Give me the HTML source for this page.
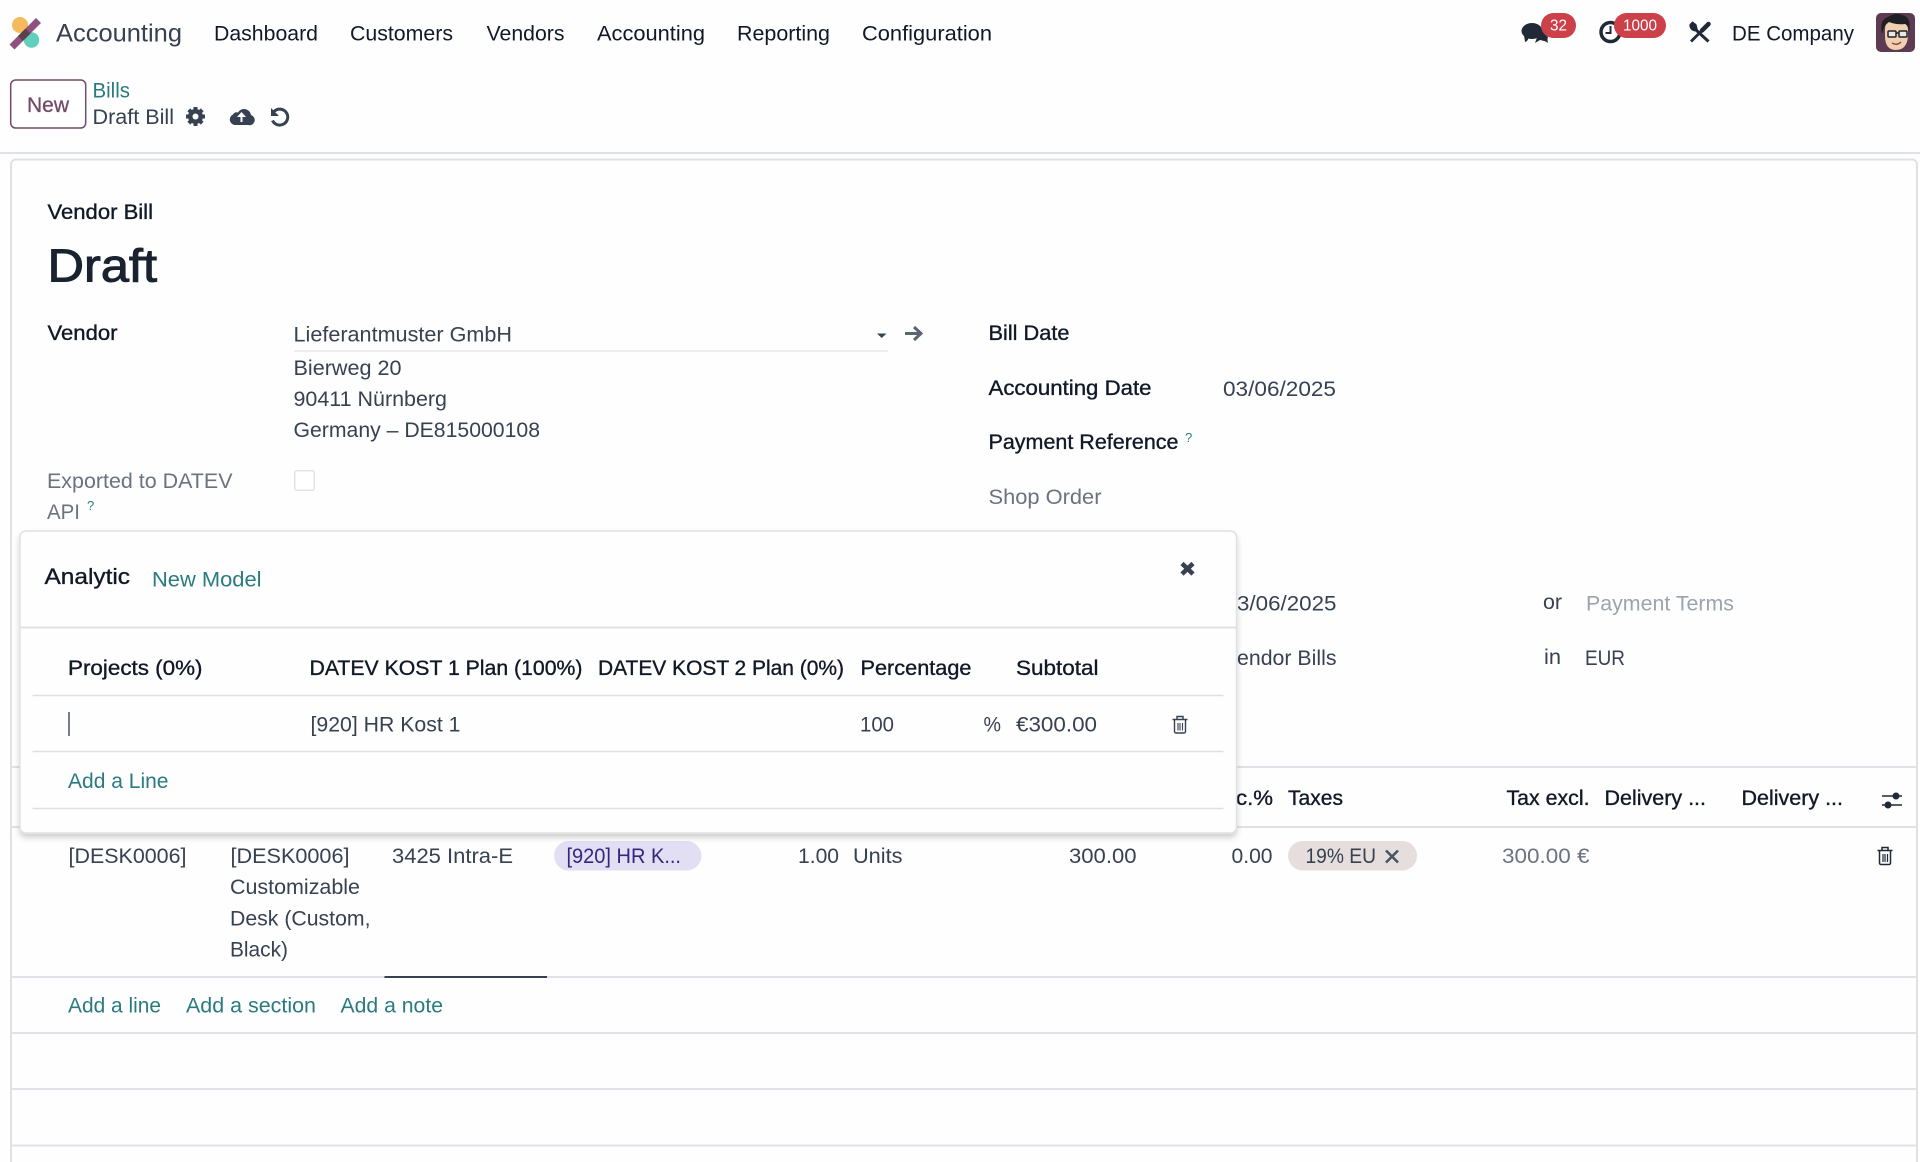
<!DOCTYPE html>
<html lang="en">
<head>
<meta charset="utf-8">
<title>Draft Bill</title>
<style>
html,body{margin:0;padding:0;background:#fefefe;width:1920px;height:1162px;overflow:hidden}
svg{display:block}
text{font-family:"Liberation Sans",sans-serif;font-size:20.8px;fill:#374151}
.h{fill:#111827}
.m{fill:#111827;stroke:#111827;stroke-width:.35px}
.t{fill:#2a7b80}
.g{fill:#6b7280}
.p{fill:#9ca3af}
.l{stroke:#dfe1e4;stroke-width:2;fill:none}
.s{stroke:#dfe1e4;stroke-width:1.5;fill:none}
</style>
</head>
<body>
<svg width="1920" height="1162" viewBox="0 0 1920 1162" xmlns="http://www.w3.org/2000/svg">
<defs>
<filter id="sh" x="-5%" y="-5%" width="110%" height="115%"><feDropShadow dx="0" dy="4" stdDeviation="3" flood-color="#000" flood-opacity=".18"/></filter>
</defs>

<!-- navbar -->
<circle cx="20" cy="25" r="8" fill="#F3BB5C"/>
<circle cx="31.5" cy="40" r="7.7" fill="#5FD0B9"/>
<path d="M12 47 L38.5 20.5" stroke="#8F527F" stroke-width="7"/>
<path d="M20.5 38.5 L28 31" stroke="#5b4150" stroke-width="7"/>
<text x="56" y="41.5" style="font-size:25px" textLength="126" lengthAdjust="spacingAndGlyphs">Accounting</text>
<text class="h" x="214" y="40.5" textLength="104" lengthAdjust="spacingAndGlyphs">Dashboard</text>
<text class="h" x="350" y="40.5" textLength="103" lengthAdjust="spacingAndGlyphs">Customers</text>
<text class="h" x="486.5" y="40.5" textLength="78" lengthAdjust="spacingAndGlyphs">Vendors</text>
<text class="h" x="597" y="40.5" textLength="108" lengthAdjust="spacingAndGlyphs">Accounting</text>
<text class="h" x="737" y="40.5" textLength="93" lengthAdjust="spacingAndGlyphs">Reporting</text>
<text class="h" x="862" y="40.5" textLength="130" lengthAdjust="spacingAndGlyphs">Configuration</text>

<!-- chat icon -->
<g fill="#1f2937">
<path d="M1535 43 l5 -3 q6 1 8 3 q-1 -4 0 -6 l-8 -8 z"/>
<ellipse cx="1532" cy="31" rx="10.5" ry="8"/>
<path d="M1525 42 q3 -1 4 -5 l-5 -2 z"/>
</g>
<!-- clock -->
<circle cx="1610.5" cy="32" r="9.5" fill="none" stroke="#1f2937" stroke-width="3.5"/>
<path d="M1610.5 26v7h-5" fill="none" stroke="#1f2937" stroke-width="2"/>
<!-- badges -->
<rect x="1541" y="13" width="35" height="25" rx="12.5" fill="#cc404a"/>
<text x="1550" y="30.5" style="font-size:16px;fill:#fff" textLength="17" lengthAdjust="spacingAndGlyphs">32</text>
<rect x="1614" y="13" width="52" height="25" rx="12.5" fill="#cc404a"/>
<text x="1623" y="30.5" style="font-size:16px;fill:#fff" textLength="34" lengthAdjust="spacingAndGlyphs">1000</text>
<!-- tools -->
<g fill="none" stroke="#1f2937">
<path d="M1695 29 L1708.5 41.5" stroke-width="3"/>
<path d="M1690 24.5 a5.5 5.5 0 0 0 7.500 6 l-1.500 -6 -3.500 -2.500z" fill="#1f2937" stroke-width="1"/>
<path d="M1691 41.5 L1701 31.5" stroke-width="2.800"/>
<path d="M1702 30.500 L1708.5 24" stroke-width="4.500" stroke-linecap="round"/>
</g>
<text class="h" x="1732" y="40.5" textLength="122" lengthAdjust="spacingAndGlyphs">DE Company</text>
<!-- avatar -->
<rect x="1876" y="13" width="39" height="39" rx="5" fill="#5d3c53"/>
<path d="M1885 30 q0 -13 11 -13 q12 0 12 13 v6 q-1 14 -12 14 q-11 0 -11 -14z" fill="#f1cfb1"/>
<path d="M1882 34 q-3 -14 6 -17 q8 -5 14 -2 q10 2 7 17 q-1 -7 -4 -8 q-8 1 -16 -2 q-5 3 -7 12z" fill="#1f1f24"/>
<rect x="1888" y="31" width="8" height="6" rx="1" fill="#e8e8e8" stroke="#222" stroke-width="1.5"/>
<rect x="1899" y="31" width="8" height="6" rx="1" fill="#e8e8e8" stroke="#222" stroke-width="1.5"/>
<path d="M1896 33h3" stroke="#222" stroke-width="1.5"/>
<path d="M1892 43q5 3 9 -1" stroke="#8a4a3a" stroke-width="1.5" fill="none"/>

<!-- control panel -->
<rect x="10.7" y="80" width="75" height="48" rx="5" fill="#fff" stroke="#714B67" stroke-width="1.5"/>
<text x="27" y="112" style="fill:#714B67;stroke:#714B67;stroke-width:.3px" textLength="42" lengthAdjust="spacingAndGlyphs">New</text>
<text class="t" x="92.5" y="97.5" textLength="37.5" lengthAdjust="spacingAndGlyphs">Bills</text>
<text x="92.5" y="124" textLength="81.5" lengthAdjust="spacingAndGlyphs">Draft Bill</text>
<!-- gear -->
<g fill="#374151" transform="translate(195.5 116.5)">
<circle r="5.5" fill="none" stroke="#374151" stroke-width="4"/>
<rect x="-2" y="-9.500" width="4" height="19"/><rect x="-2" y="-9.500" width="4" height="19" transform="rotate(45)"/><rect x="-2" y="-9.500" width="4" height="19" transform="rotate(90)"/><rect x="-2" y="-9.500" width="4" height="19" transform="rotate(135)"/>
<circle r="3" fill="#fefefe"/>
</g>
<!-- cloud -->
<path d="M235 125 a5.500 5.500 0 0 1 -2 -10.500 a4 4 0 0 1 5 -2 a7 7 0 0 1 13 2.500 a5 5 0 0 1 -3 10z" fill="#374151"/>
<path d="M240.500 122v-5h-3.500l4.500-5 4.500 5h-3.500v5z" fill="#fff"/>
<!-- undo -->
<path d="M274 111.5 a8 8 0 1 1 -1.500 9" fill="none" stroke="#374151" stroke-width="3"/>
<path d="M271 108v8h8z" fill="#374151"/>
<path class="l" d="M0 153H1920"/>

<!-- sheet -->
<path class="l" d="M11 1162V165a5 5 0 0 1 5-5.500H1912a5 5 0 0 1 5 5.500V1162"/>

<text class="m" x="47.5" y="219" textLength="105.5" lengthAdjust="spacingAndGlyphs">Vendor Bill</text>
<text x="47.5" y="281.5" style="font-size:46px;fill:#1a2230;stroke:#1a2230;stroke-width:1px" textLength="109.5" lengthAdjust="spacingAndGlyphs">Draft</text>

<text class="m" x="47.5" y="340" textLength="70" lengthAdjust="spacingAndGlyphs">Vendor</text>
<text x="293.5" y="341.5" textLength="218.5" lengthAdjust="spacingAndGlyphs">Lieferantmuster GmbH</text>
<path d="M294 351H888" stroke="#e3e5e8" stroke-width="1.300"/>
<path d="M877 333.5h9.500l-4.750 4.500z" fill="#374151"/>
<path d="M905 333.5h15M914 327l7 6.500-7 6.500" fill="none" stroke="#5b6472" stroke-width="3"/>
<text x="293.5" y="375" textLength="108" lengthAdjust="spacingAndGlyphs">Bierweg 20</text>
<text x="293.5" y="406" textLength="153.5" lengthAdjust="spacingAndGlyphs">90411 Nürnberg</text>
<text x="293.5" y="437" textLength="246.5" lengthAdjust="spacingAndGlyphs">Germany – DE815000108</text>

<text class="g" x="47" y="488" textLength="185.5" lengthAdjust="spacingAndGlyphs">Exported to DATEV</text>
<text class="g" x="47" y="519" textLength="33" lengthAdjust="spacingAndGlyphs">API</text>
<text class="t" x="87" y="510" style="font-size:13px">?</text>
<rect x="294.7" y="470.7" width="19.5" height="19.5" rx="2" fill="#fff" stroke="#dfe2e6" stroke-width="1.400"/>

<text class="m" x="988.5" y="340" textLength="81" lengthAdjust="spacingAndGlyphs">Bill Date</text>
<text class="m" x="988.5" y="395" textLength="163" lengthAdjust="spacingAndGlyphs">Accounting Date</text>
<text x="1223" y="396" textLength="113" lengthAdjust="spacingAndGlyphs">03/06/2025</text>
<text class="m" x="988.5" y="449" textLength="190" lengthAdjust="spacingAndGlyphs">Payment Reference</text>
<text class="t" x="1185" y="442" style="font-size:13px">?</text>
<text class="g" x="988.5" y="504" textLength="113" lengthAdjust="spacingAndGlyphs">Shop Order</text>

<text x="1237" y="610.5" textLength="99.5" lengthAdjust="spacingAndGlyphs">3/06/2025</text>
<text x="1543" y="609" textLength="19" lengthAdjust="spacingAndGlyphs">or</text>
<text class="p" x="1586" y="610.5" textLength="148" lengthAdjust="spacingAndGlyphs">Payment Terms</text>
<text x="1237" y="665" textLength="99.5" lengthAdjust="spacingAndGlyphs">endor Bills</text>
<text x="1544" y="664" textLength="17" lengthAdjust="spacingAndGlyphs">in</text>
<text x="1585" y="665" textLength="40" lengthAdjust="spacingAndGlyphs">EUR</text>

<!-- lines table -->
<path class="l" d="M11 767H1917M11 827H1917"/>
<text class="m" x="1236" y="805" textLength="37" lengthAdjust="spacingAndGlyphs">c.%</text>
<text class="m" x="1288" y="805" textLength="55" lengthAdjust="spacingAndGlyphs">Taxes</text>
<text class="m" x="1506.5" y="805" textLength="83" lengthAdjust="spacingAndGlyphs">Tax excl.</text>
<text class="m" x="1604.5" y="805" textLength="101.5" lengthAdjust="spacingAndGlyphs">Delivery ...</text>
<text class="m" x="1741.5" y="805" textLength="101.5" lengthAdjust="spacingAndGlyphs">Delivery ...</text>
<g stroke="#1f2937" fill="#1f2937">
<path d="M1882 796h20M1882 805h20" stroke-width="1.500"/>
<circle cx="1896" cy="796" r="3.500" stroke="none"/>
<circle cx="1888" cy="805" r="3.500" stroke="none"/>
</g>

<text x="68.5" y="863" textLength="118" lengthAdjust="spacingAndGlyphs">[DESK0006]</text>
<text x="230.5" y="863" textLength="119" lengthAdjust="spacingAndGlyphs">[DESK0006]</text>
<text x="230" y="894" textLength="130" lengthAdjust="spacingAndGlyphs">Customizable</text>
<text x="230" y="925.5" textLength="140.5" lengthAdjust="spacingAndGlyphs">Desk (Custom,</text>
<text x="230" y="956.5" textLength="58" lengthAdjust="spacingAndGlyphs">Black)</text>
<text x="392" y="863" textLength="121" lengthAdjust="spacingAndGlyphs">3425 Intra-E</text>
<rect x="554" y="841" width="147.5" height="29.5" rx="14.75" fill="#e2dff4"/>
<text x="566.5" y="863" style="fill:#36267a" textLength="114.5" lengthAdjust="spacingAndGlyphs">[920] HR K...</text>
<text x="798" y="863" textLength="41" lengthAdjust="spacingAndGlyphs">1.00</text>
<text x="853" y="863" textLength="49.5" lengthAdjust="spacingAndGlyphs">Units</text>
<text x="1069" y="863" textLength="67.5" lengthAdjust="spacingAndGlyphs">300.00</text>
<text x="1231.5" y="863" textLength="41" lengthAdjust="spacingAndGlyphs">0.00</text>
<rect x="1288" y="841" width="129" height="29.5" rx="14.75" fill="#e5dedd"/>
<text x="1305.5" y="863" textLength="70.5" lengthAdjust="spacingAndGlyphs">19% EU</text>
<path d="M1386 850.5l12 12M1398 850.5l-12 12" stroke="#4b5563" stroke-width="2.600"/>
<text class="g" x="1502" y="863" textLength="87.5" lengthAdjust="spacingAndGlyphs">300.00 €</text>
<g fill="none" stroke="#1f2937" stroke-width="1.500">
<path d="M1877.5 850.5h15M1882 850v-2.500h6v2.500"/>
<path d="M1879.5 851v12a1.500 1.500 0 0 0 1.500 1.500h8a1.500 1.500 0 0 0 1.500-1.500v-12"/>
<path d="M1883 854v8M1885 854v8M1887.5 854v8" stroke-width="1.200"/>
</g>

<path class="l" d="M11 977H1917"/>
<path d="M384.5 977H547" stroke="#374151" stroke-width="2"/>
<text class="t" x="68" y="1012.5" textLength="93" lengthAdjust="spacingAndGlyphs">Add a line</text>
<text class="t" x="186" y="1012.5" textLength="130" lengthAdjust="spacingAndGlyphs">Add a section</text>
<text class="t" x="340.5" y="1012.5" textLength="102.5" lengthAdjust="spacingAndGlyphs">Add a note</text>
<path class="l" d="M11 1033H1917M11 1089H1917M11 1145.5H1917"/>

<!-- analytic popover -->
<rect x="20" y="531" width="1216.5" height="302" rx="6" fill="#fefefe" stroke="#dfe1e4" stroke-width="1.500" filter="url(#sh)"/>
<text class="m" x="44.5" y="584" style="font-size:22px" textLength="85.5" lengthAdjust="spacingAndGlyphs">Analytic</text>
<text class="t" x="152" y="586.5" textLength="109.5" lengthAdjust="spacingAndGlyphs">New Model</text>
<path d="M1182 563.5l11 10.500M1193 563.5l-11 10.500" stroke="#374151" stroke-width="4.600"/>
<path class="l" d="M20 627.5H1236"/>
<text class="m" x="68" y="675" textLength="134.5" lengthAdjust="spacingAndGlyphs">Projects (0%)</text>
<text class="m" x="309.5" y="675" textLength="273" lengthAdjust="spacingAndGlyphs">DATEV KOST 1 Plan (100%)</text>
<text class="m" x="598" y="675" textLength="246" lengthAdjust="spacingAndGlyphs">DATEV KOST 2 Plan (0%)</text>
<text class="m" x="860.5" y="675" textLength="111" lengthAdjust="spacingAndGlyphs">Percentage</text>
<text class="m" x="1016" y="675" textLength="82.5" lengthAdjust="spacingAndGlyphs">Subtotal</text>
<path class="s" d="M32.5 695.5H1223.5M32.5 751.5H1223.5M32.5 808.5H1223.5"/>
<path d="M69 712V736" stroke="#1f2937" stroke-width="1.200"/>
<text x="310.5" y="731.5" textLength="150" lengthAdjust="spacingAndGlyphs">[920] HR Kost 1</text>
<text x="860" y="731.5" textLength="34" lengthAdjust="spacingAndGlyphs">100</text>
<text x="983.5" y="731.5" textLength="17.5" lengthAdjust="spacingAndGlyphs">%</text>
<text x="1016" y="731.5" textLength="81" lengthAdjust="spacingAndGlyphs">€300.00</text>
<g fill="none" stroke="#374151" stroke-width="1.400">
<path d="M1172.5 719.5h15M1177 719v-2.500h6v2.500"/>
<path d="M1174.5 720v11.500a1.500 1.500 0 0 0 1.500 1.500h8a1.500 1.500 0 0 0 1.500-1.500v-11.500"/>
<path d="M1178 723v7.500M1180 723v7.500M1182.5 723v7.500" stroke-width="1.100"/>
</g>
<text class="t" x="68" y="788" textLength="100.5" lengthAdjust="spacingAndGlyphs">Add a Line</text>
</svg>
</body>
</html>
